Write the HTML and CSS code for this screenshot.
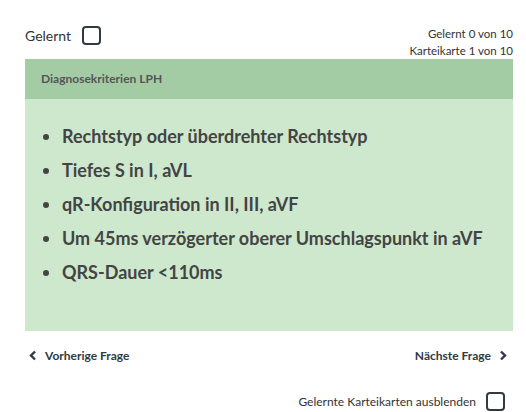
FILE: index.html
```html
<!DOCTYPE html>
<html lang="de">
<head>
    <meta charset="UTF-8">
    <meta name="viewport" content="width=device-width, initial-scale=1.0">
    <title>Karteikarten</title>
    <link rel="stylesheet" href="styles.css">
</head>
<body>
    <div class="page">
        <div class="top-row">
            <label class="check-label">
                <span>Gelernt</span>
                <span class="checkbox"></span>
            </label>
            <div class="stats">
                <div>Gelernt 0 von 10</div>
                <div>Karteikarte 1 von 10</div>
            </div>
        </div>

        <div class="card">
            <div class="card-header">Diagnosekriterien LPH</div>
            <div class="card-body">
                <ul class="criteria">
                    <li>Rechtstyp oder überdrehter Rechtstyp</li>
                    <li>Tiefes S in I, aVL</li>
                    <li>qR-Konfiguration in II, III, aVF</li>
                    <li>Um 45ms verzögerter oberer Umschlagspunkt in aVF</li>
                    <li>QRS-Dauer &lt;110ms</li>
                </ul>
            </div>
        </div>

        <div class="nav-row">
            <a class="nav-btn">
                <svg width="8" height="11" viewBox="0 0 8 11"><path d="M6 1.5 L2 5.5 L6 9.5" fill="none" stroke="#2f3a44" stroke-width="2.4"/></svg>
                Vorherige Frage
            </a>
            <a class="nav-btn">
                Nächste Frage
                <svg width="8" height="11" viewBox="0 0 8 11"><path d="M2 1.5 L6 5.5 L2 9.5" fill="none" stroke="#2f3a44" stroke-width="2.4"/></svg>
            </a>
        </div>

        <div class="bottom-row">
            <label class="check-label small">
                <span>Gelernte Karteikarten ausblenden</span>
                <span class="checkbox"></span>
            </label>
        </div>
    </div>
</body>
</html>
```

FILE: styles.css
```css
body {
    font-family: 'Lato', 'Open Sans', sans-serif;
    margin: 0;
    background: #fff;
    color: #333;
}

.page {
    width: 488px;
    padding: 25px 13px 0 25px;
}

.top-row {
    display: flex;
    justify-content: space-between;
    align-items: flex-start;
    height: 34px;
}

.check-label {
    display: flex;
    align-items: center;
    gap: 11px;
    font-size: 14px;
    color: #333;
    margin-top: 1px;
}

.checkbox {
    display: inline-block;
    width: 15px;
    height: 15px;
    border: 2px solid #2f3a44;
    border-radius: 4px;
}

.stats {
    text-align: right;
    font-size: 11.5px;
    line-height: 17px;
    color: #333;
}

.card-header {
    background: #a3cca5;
    height: 40px;
    line-height: 40px;
    padding-left: 16px;
    font-size: 12px;
    font-weight: bold;
    color: #555;
}

.card-body {
    background: #cde8cd;
    height: 232px;
    padding-top: 20px;
    box-sizing: border-box;
}

.criteria {
    margin: 0;
    padding-left: 37px;
    font-size: 18px;
    font-weight: bold;
    color: #444;
}

.criteria li {
    line-height: 34px;
}

.nav-row {
    display: flex;
    justify-content: space-between;
    padding: 17px 6px 0 4px;
}

.nav-btn {
    display: flex;
    align-items: center;
    gap: 8px;
    font-size: 12px;
    font-weight: bold;
    color: #2f3a44;
}

.bottom-row {
    display: flex;
    justify-content: flex-end;
    padding: 28px 8px 0 0;
}

.check-label.small {
    font-size: 12px;
    gap: 10px;
}
```
